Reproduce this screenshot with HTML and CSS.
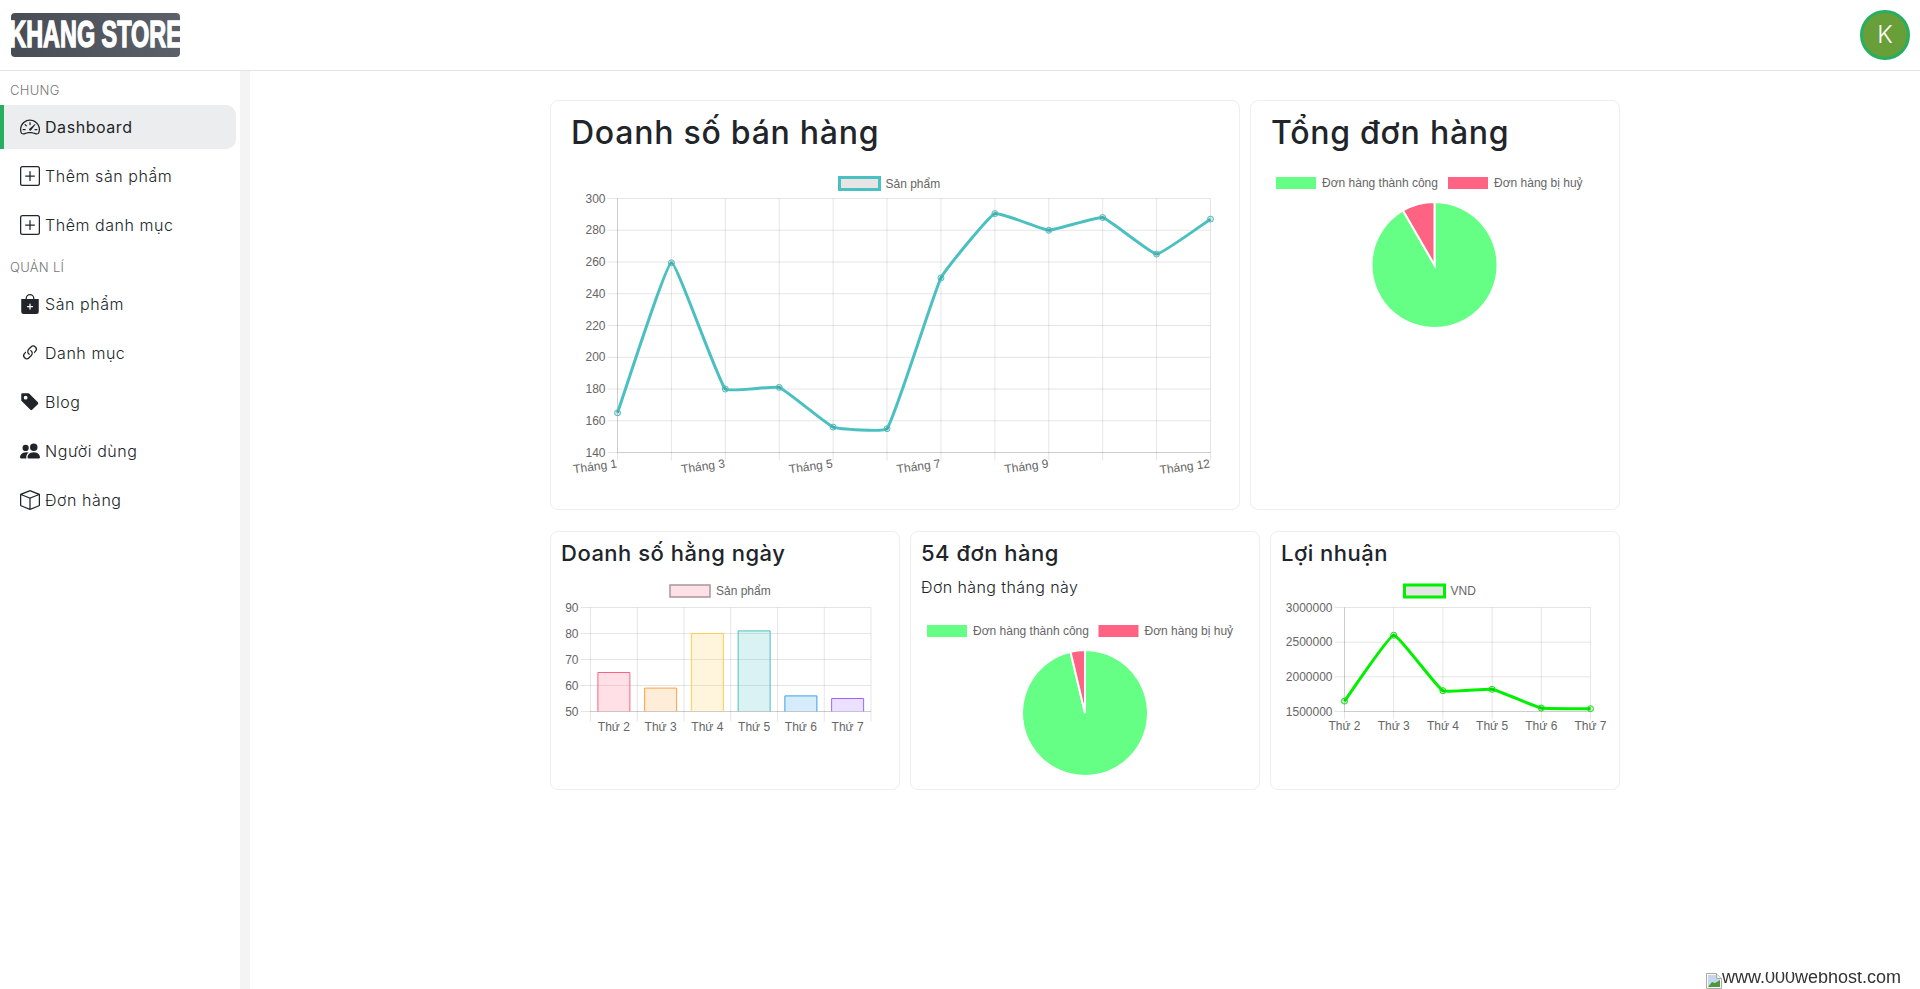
FILE: index.html
```html
<!DOCTYPE html>
<html lang="vi">
<head>
  <meta charset="utf-8">
  <title>Khang Store</title>
  <link rel="stylesheet" href="styles.css">
</head>
<body>
  <header class="topbar">
    <a class="logo" href="#"><span class="logo-text">KHANG STORE</span></a>
    <div class="avatar">K</div>
  </header>

  <div class="layout">
    <nav class="sidebar">
      <div class="side-label">CHUNG</div>
      <a class="side-item active" href="#">
        <svg class="ico" viewBox="0 0 16 16"><path d="M8 4a.5.5 0 0 1 .5.5V6a.5.5 0 0 1-1 0V4.5A.5.5 0 0 1 8 4zM3.732 5.732a.5.5 0 0 1 .707 0l.915.914a.5.5 0 1 1-.708.708l-.914-.915a.5.5 0 0 1 0-.707zM2 10a.5.5 0 0 1 .5-.5h1.586a.5.5 0 0 1 0 1H2.5A.5.5 0 0 1 2 10zm9.5 0a.5.5 0 0 1 .5-.5h1.5a.5.5 0 0 1 0 1H12a.5.5 0 0 1-.5-.5zm.754-4.246a.389.389 0 0 0-.527-.02L7.547 9.31a.91.91 0 1 0 1.302 1.258l3.434-4.297a.389.389 0 0 0-.029-.518z"/><path fill-rule="evenodd" d="M0 10a8 8 0 1 1 15.547 2.661c-.442 1.253-1.845 1.602-2.932 1.25C11.309 13.488 9.475 13 8 13c-1.474 0-3.31.488-4.615.911-1.087.352-2.49.003-2.932-1.25A7.988 7.988 0 0 1 0 10zm8-7a7 7 0 0 0-6.603 9.329c.203.575.923.876 1.68.63C4.397 12.533 6.358 12 8 12s3.604.532 4.923.96c.757.245 1.477-.056 1.68-.631A7 7 0 0 0 8 3z"/></svg>
        Dashboard
      </a>
      <a class="side-item" href="#">
        <svg class="ico" viewBox="0 0 16 16"><path d="M14 1a1 1 0 0 1 1 1v12a1 1 0 0 1-1 1H2a1 1 0 0 1-1-1V2a1 1 0 0 1 1-1h12zM2 0a2 2 0 0 0-2 2v12a2 2 0 0 0 2 2h12a2 2 0 0 0 2-2V2a2 2 0 0 0-2-2H2z"/><path d="M8 4a.5.5 0 0 1 .5.5v3h3a.5.5 0 0 1 0 1h-3v3a.5.5 0 0 1-1 0v-3h-3a.5.5 0 0 1 0-1h3v-3A.5.5 0 0 1 8 4z"/></svg>
        Thêm sản phẩm
      </a>
      <a class="side-item" href="#">
        <svg class="ico" viewBox="0 0 16 16"><path d="M14 1a1 1 0 0 1 1 1v12a1 1 0 0 1-1 1H2a1 1 0 0 1-1-1V2a1 1 0 0 1 1-1h12zM2 0a2 2 0 0 0-2 2v12a2 2 0 0 0 2 2h12a2 2 0 0 0 2-2V2a2 2 0 0 0-2-2H2z"/><path d="M8 4a.5.5 0 0 1 .5.5v3h3a.5.5 0 0 1 0 1h-3v3a.5.5 0 0 1-1 0v-3h-3a.5.5 0 0 1 0-1h3v-3A.5.5 0 0 1 8 4z"/></svg>
        Thêm danh mục
      </a>
      <div class="side-label">QUẢN LÍ</div>
      <a class="side-item" href="#">
        <svg class="ico" viewBox="0 0 16 16"><path fill-rule="evenodd" d="M10.5 3.5a2.5 2.5 0 0 0-5 0V4h5v-.5zm1 0V4H15v10a2 2 0 0 1-2 2H3a2 2 0 0 1-2-2V4h3.5v-.5a3.5 3.5 0 1 1 7 0zM8.5 8a.5.5 0 0 0-1 0v1.5H6a.5.5 0 0 0 0 1h1.5V12a.5.5 0 0 0 1 0v-1.5H10a.5.5 0 0 0 0-1H8.5V8z"/></svg>
        Sản phẩm
      </a>
      <a class="side-item" href="#">
        <svg class="ico" viewBox="0 0 16 16"><path d="M4.715 6.542 3.343 7.914a3 3 0 1 0 4.243 4.243l1.828-1.829A3 3 0 0 0 8.586 5.5L8 6.086a1.002 1.002 0 0 0-.154.199 2 2 0 0 1 .861 3.337L6.88 11.45a2 2 0 1 1-2.83-2.83l.793-.792a4.018 4.018 0 0 1-.128-1.287z"/><path d="M6.586 4.672A3 3 0 0 0 7.414 9.5l.775-.776a2 2 0 0 1-.896-3.346L9.12 3.55a2 2 0 1 1 2.83 2.83l-.793.792c.112.42.155.855.128 1.287l1.372-1.372a3 3 0 1 0-4.243-4.243L6.586 4.672z"/></svg>
        Danh mục
      </a>
      <a class="side-item" href="#">
        <svg class="ico" viewBox="0 0 16 16"><path d="M2 1a1 1 0 0 0-1 1v4.586a1 1 0 0 0 .293.707l7 7a1 1 0 0 0 1.414 0l4.586-4.586a1 1 0 0 0 0-1.414l-7-7A1 1 0 0 0 6.586 1H2zm4 3.5a1.5 1.5 0 1 1-3 0 1.5 1.5 0 0 1 3 0z"/></svg>
        Blog
      </a>
      <a class="side-item" href="#">
        <svg class="ico" viewBox="0 0 16 16"><path d="M7 14s-1 0-1-1 1-4 5-4 5 3 5 4-1 1-1 1H7zm4-6a3 3 0 1 0 0-6 3 3 0 0 0 0 6z"/><path fill-rule="evenodd" d="M5.216 14A2.238 2.238 0 0 1 5 13c0-1.355.68-2.75 1.936-3.72A6.325 6.325 0 0 0 5 9c-4 0-5 3-5 4s1 1 1 1h4.216z"/><path d="M4.5 8a2.5 2.5 0 1 0 0-5 2.5 2.5 0 0 0 0 5z"/></svg>
        Người dùng
      </a>
      <a class="side-item" href="#">
        <svg class="ico" viewBox="0 0 16 16"><path d="M8.186 1.113a.5.5 0 0 0-.372 0L1.846 3.5 8 5.961 14.154 3.5 8.186 1.113zM15 4.239l-6.5 2.6v7.922l6.5-2.6V4.24zM7.5 14.762V6.838L1 4.239v7.925l6.5 2.6zM7.443.184a1.5 1.5 0 0 1 1.114 0l7.129 2.852A.5.5 0 0 1 16 3.5v8.662a1 1 0 0 1-.629.928l-7.185 2.874a.5.5 0 0 1-.372 0L.63 13.09a1 1 0 0 1-.63-.928V3.5a.5.5 0 0 1 .314-.464L7.443.184z"/></svg>
        Đơn hàng
      </a>
    </nav>

    <main class="content">
      <div class="rows">
        <div class="row row-top">
          <section class="card">
            <h2 class="title-lg">Doanh số bán hàng</h2>
            <svg id="salesChart" class="chart" width="688" height="344" viewBox="551 165 688 344"></svg>
          </section>
          <section class="card">
            <h2 class="title-lg">Tổng đơn hàng</h2>
            <svg id="ordersPie" class="chart" width="368" height="344" viewBox="1251 165 368 344"></svg>
          </section>
        </div>
        <div class="row row-bottom">
          <section class="card">
            <h3 class="title-sm">Doanh số hằng ngày</h3>
            <svg id="dailyBars" class="chart" width="348" height="214" viewBox="551 575 348 214"></svg>
          </section>
          <section class="card">
            <h3 class="title-sm">54 đơn hàng</h3>
            <p class="subtitle">Đơn hàng tháng này</p>
            <svg id="monthPie" class="chart" width="348" height="189" viewBox="911 600 348 189"></svg>
          </section>
          <section class="card">
            <h3 class="title-sm">Lợi nhuận</h3>
            <svg id="profitChart" class="chart" width="348" height="214" viewBox="1271 575 348 214"></svg>
          </section>
        </div>
      </div>
    </main>
  </div>

  <div class="host-badge">
    <svg class="broken" viewBox="0 0 16 16">
      <path d="M.5.5h10l5 5v10H.5z" fill="#fff" stroke="#a9a9a9"/>
      <path d="M2 2h8v4h4v4L8 14H2z" fill="#c6d6ef"/>
      <path d="M2 14l4-5 3 1 5-3v7z" fill="#4a9a3a"/>
      <path d="M10.5.5v5h5" fill="#eee" stroke="#a9a9a9"/>
    </svg>
    <span class="host-text">www.000webhost.com</span>
  </div>

  <script src="charts.js"></script>
</body>
</html>
```

FILE: styles.css
```css
* { box-sizing: border-box; }

html, body {
	margin: 0;
	height: 100%;
	overflow: hidden;
}

body {
	font-family: Inter, "Noto Sans", sans-serif;
	color: #212529;
	background: #fff;
}

/* Top bar */
.topbar {
	height: 71px;
	display: flex;
	align-items: center;
	justify-content: space-between;
	padding: 0 10px 1px 11px;
	border-bottom: 1px solid #e3e3e3;
}

.logo {
	width: 169px;
	height: 44px;
	display: flex;
	align-items: center;
	justify-content: center;
	border-radius: 4px;
	background: linear-gradient(90deg, #484c55, #5b6069);
	text-decoration: none;
	overflow: hidden;
}

.logo-text {
	font-family: "Liberation Sans", sans-serif;
	font-weight: bold;
	font-size: 30px;
	color: #fff;
	white-space: nowrap;
	-webkit-text-stroke: 1.2px #fff;
	transform: scale(.78, 1.22);
}

.avatar {
	width: 50px;
	height: 50px;
	display: flex;
	align-items: center;
	justify-content: center;
	border-radius: 50%;
	border: 3px solid #27ae60;
	background: #689f38;
	color: #fff;
	font-size: 24px;
	font-weight: 300;
}

/* Sidebar */
.layout {
	display: flex;
	height: calc(100% - 71px);
}

.sidebar {
	width: 250px;
	flex: none;
	padding-top: 4px;
	border-right: 10px solid #f4f4f4;
}

.side-label {
	height: 30px;
	padding-left: 10px;
	display: flex;
	align-items: center;
	font-size: 13px;
	font-weight: 300;
	letter-spacing: .3px;
	color: #777;
}

.side-item {
	width: 236px;
	height: 44px;
	margin-bottom: 5px;
	padding-left: 20px;
	display: flex;
	align-items: center;
	gap: 5px;
	font-size: 16px;
	font-weight: 300;
	letter-spacing: .55px;
	color: #212529;
	text-decoration: none;
	border-radius: 0 10px 10px 0;
}

.side-item.active {
	background: #ecedef;
	box-shadow: inset 4px 0 0 #27ae60;
	font-weight: 400;
}

.ico {
	width: 20px;
	height: 20px;
	flex: none;
	fill: currentColor;
}

/* Cards */
.content {
	flex: 1;
	display: flex;
	justify-content: center;
	padding-top: 29px;
}

.rows {
	width: 1070px;
}

.row {
	display: grid;
	gap: 10px;
}

.row-top {
	grid-template-columns: 690px 370px;
	margin-bottom: 21px;
}

.row-bottom {
	grid-template-columns: 350px 350px 350px;
}

.card {
	border: 1px solid #eee;
	border-radius: 8px;
	background: #fff;
}

.title-lg {
	height: 64px;
	margin: 0;
	padding-left: 20px;
	font-size: 32px;
	font-weight: 500;
	line-height: 64px;
	letter-spacing: .75px;
}

.title-sm {
	height: 43px;
	margin: 0;
	padding-left: 10px;
	font-size: 22px;
	font-weight: 500;
	line-height: 43px;
	letter-spacing: .5px;
}

.subtitle {
	height: 25px;
	margin: 0;
	padding-left: 10px;
	font-size: 16px;
	font-weight: 300;
	line-height: 25px;
	letter-spacing: .4px;
}

.chart {
	display: block;
}

.chart text {
	font-family: "Liberation Sans", Arial, sans-serif;
	font-size: 12px;
	fill: #666;
}

/* Footer badge of the free host, cut by the window edge */
.host-badge {
	position: fixed;
	right: 19px;
	bottom: 0;
	height: 17px;
	display: flex;
	align-items: flex-end;
	overflow: hidden;
}

.broken {
	width: 16px;
	height: 16px;
	flex: none;
}

.host-text {
	height: 17px;
	font-family: "Liberation Sans", Arial, sans-serif;
	font-size: 18px;
	line-height: 10px;
	color: #333;
	white-space: nowrap;
}
```

FILE: charts.js
```js
var NS = 'http://www.w3.org/2000/svg';
var GRID = 'rgba(0,0,0,0.1)';

function add(svg, tag, attrs, text) {
  var el = document.createElementNS(NS, tag);
  for (var k in attrs) el.setAttribute(k, attrs[k]);
  if (text !== undefined) el.textContent = text;
  svg.appendChild(el);
  return el;
}

function line(svg, x1, y1, x2, y2) {
  add(svg, 'line', { x1: x1, y1: y1, x2: x2, y2: y2, stroke: GRID });
}

function label(svg, x, y, str, anchor, rotate) {
  var attrs = { x: x, y: y, 'text-anchor': anchor || 'start' };
  if (rotate) attrs.transform = 'rotate(' + rotate + ' ' + x + ' ' + y + ')';
  add(svg, 'text', attrs, str);
}

// legend box + text, same look as the chart lib
function legendBox(svg, x, y, fill, stroke, width, str) {
  add(svg, 'rect', { x: x, y: y, width: 40, height: 12, fill: fill, stroke: stroke, 'stroke-width': width });
  label(svg, x + 46, y + 10, str);
}

function yAxis(svg, c) {
  c.ticks.forEach(function (t, i) {
    var y = c.top + i * (c.bottom - c.top) / (c.ticks.length - 1);
    line(svg, c.left - 10, y, c.right, y);
    if (i == c.ticks.length - 1) line(svg, c.left, y, c.right, y);
    label(svg, c.left - 12, y + 4, t, 'end');
  });
}

// bezier like the chart lib does with a tension value
function smoothPath(pts, t) {
  var cp = pts.map(function (p, i) {
    var a = pts[i - 1] || p, b = pts[i + 1] || p;
    var d1 = Math.hypot(p[0] - a[0], p[1] - a[1]);
    var d2 = Math.hypot(b[0] - p[0], b[1] - p[1]);
    var s = d1 + d2 || 1;
    return {
      px: p[0] - t * d1 / s * (b[0] - a[0]), py: p[1] - t * d1 / s * (b[1] - a[1]),
      nx: p[0] + t * d2 / s * (b[0] - a[0]), ny: p[1] + t * d2 / s * (b[1] - a[1])
    };
  });
  var d = 'M' + pts[0][0] + ' ' + pts[0][1];
  for (var i = 1; i < pts.length; i++) {
    d += 'C' + cp[i - 1].nx + ' ' + cp[i - 1].ny + ' ' + cp[i].px + ' ' + cp[i].py + ' ' + pts[i][0] + ' ' + pts[i][1];
  }
  return d;
}

function lineChart(svg, c) {
  yAxis(svg, c);
  var n = c.data.length;
  var step = (c.right - c.left) / (n - 1);
  for (var i = 0; i < n; i++) {
    var x = c.left + i * step;
    line(svg, x, c.top, x, c.bottom + 8);
    if (i == 0) line(svg, x, c.top, x, c.bottom);
    if (c.labels[i]) {
      if (c.rotate) label(svg, x, c.bottom + 15, c.labels[i], 'end', c.rotate);
      else label(svg, x, c.bottom + 18, c.labels[i], 'middle');
    }
  }
  var pts = c.data.map(function (v, i) {
    return [c.left + i * step, c.bottom - (v - c.min) / (c.max - c.min) * (c.bottom - c.top)];
  });
  add(svg, 'path', { d: smoothPath(pts, 0.1), fill: 'none', stroke: c.color, 'stroke-width': 3 });
  pts.forEach(function (p) {
    add(svg, 'circle', { cx: p[0], cy: p[1], r: 3, fill: GRID, stroke: c.color });
  });
}

function barChart(svg, c) {
  yAxis(svg, c);
  var n = c.data.length;
  var step = (c.right - c.left) / n;
  for (var i = 0; i <= n; i++) {
    line(svg, c.left + i * step, c.top, c.left + i * step, c.bottom + 10);
  }
  c.data.forEach(function (v, i) {
    var cx = c.left + (i + .5) * step;
    var y = c.bottom - (v - c.min) / (c.max - c.min) * (c.bottom - c.top);
    var col = c.colors[i];
    var x1 = cx - 16, x2 = cx + 16;
    add(svg, 'rect', { x: x1, y: y, width: 32, height: c.bottom - y, fill: 'rgba(' + col + ',0.2)' });
    add(svg, 'path', { d: 'M' + x1 + ' ' + c.bottom + 'V' + y + 'H' + x2 + 'V' + c.bottom, fill: 'none', stroke: 'rgb(' + col + ')' });
    label(svg, cx, c.bottom + 19, c.labels[i], 'middle');
  });
}

function pieChart(svg, c) {
  var total = c.a + c.b;
  var ang = 2 * Math.PI * c.b / total;
  var px = c.x - c.r * Math.sin(ang), py = c.y - c.r * Math.cos(ang);
  var big = 'M' + c.x + ' ' + c.y + 'L' + c.x + ' ' + (c.y - c.r) +
    'A' + c.r + ' ' + c.r + ' 0 1 1 ' + px + ' ' + py + 'Z';
  var small = 'M' + c.x + ' ' + c.y + 'L' + px + ' ' + py +
    'A' + c.r + ' ' + c.r + ' 0 0 1 ' + c.x + ' ' + (c.y - c.r) + 'Z';
  add(svg, 'path', { d: big, fill: GREEN, stroke: '#fff', 'stroke-width': 2 });
  add(svg, 'path', { d: small, fill: PINK, stroke: '#fff', 'stroke-width': 2 });
}

var GREEN = '#66ff85';
var PINK = '#ff6384';

function pieLegend(svg, x1, x2, y) {
  add(svg, 'rect', { x: x1, y: y, width: 40, height: 12, fill: GREEN });
  label(svg, x1 + 46, y + 10, 'Đơn hàng thành công');
  add(svg, 'rect', { x: x2, y: y, width: 40, height: 12, fill: PINK });
  label(svg, x2 + 46, y + 10, 'Đơn hàng bị huỷ');
}

var el = document.getElementById('salesChart');
legendBox(el, 839.5, 177.5, GRID, 'rgb(75,192,192)', 3, 'Sản phẩm');
lineChart(el, {
  left: 617.5, right: 1210.5, top: 198.5, bottom: 452.5, min: 140, max: 300,
  ticks: ['300', '280', '260', '240', '220', '200', '180', '160', '140'],
  data: [165, 259.5, 180, 181, 156, 155, 250, 290.5, 280, 288, 265, 287],
  labels: ['Tháng 1', '', 'Tháng 3', '', 'Tháng 5', '', 'Tháng 7', '', 'Tháng 9', '', '', 'Tháng 12'],
  color: 'rgb(75,192,192)', rotate: -7.5
});

el = document.getElementById('ordersPie');
pieLegend(el, 1276, 1448, 177);
pieChart(el, { x: 1434.5, y: 265, r: 63, a: 11, b: 1 });

el = document.getElementById('dailyBars');
legendBox(el, 670, 585, 'rgba(255,99,132,0.2)', '#a8959a', 1.5, 'Sản phẩm');
barChart(el, {
  left: 590.5, right: 871, top: 607.5, bottom: 711.5, min: 50, max: 90,
  ticks: ['90', '80', '70', '60', '50'],
  data: [65, 59, 80, 81, 56, 55],
  labels: ['Thứ 2', 'Thứ 3', 'Thứ 4', 'Thứ 5', 'Thứ 6', 'Thứ 7'],
  colors: ['255,99,132', '255,159,64', '255,205,86', '75,192,192', '54,162,235', '153,102,255']
});

el = document.getElementById('monthPie');
pieLegend(el, 927, 1098.5, 625);
pieChart(el, { x: 1085, y: 713, r: 63, a: 52, b: 2 });

el = document.getElementById('profitChart');
legendBox(el, 1404.5, 585, GRID, '#00f000', 3, 'VND');
lineChart(el, {
  left: 1344.5, right: 1590.5, top: 607.5, bottom: 711.5, min: 1500000, max: 3000000,
  ticks: ['3000000', '2500000', '2000000', '1500000'],
  data: [1650000, 2600000, 1800000, 1820000, 1550000, 1540000],
  labels: ['Thứ 2', 'Thứ 3', 'Thứ 4', 'Thứ 5', 'Thứ 6', 'Thứ 7'],
  color: '#00f000'
});
```
